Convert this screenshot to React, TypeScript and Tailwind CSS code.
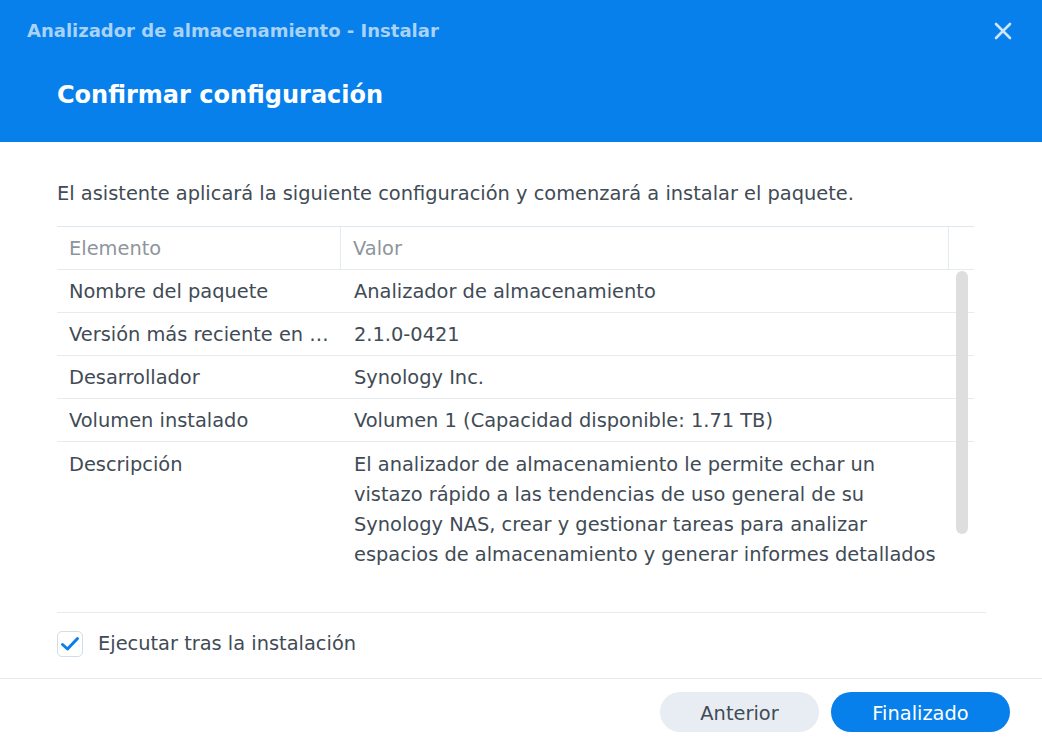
import React, { useState } from "react";

const rows = [
  { label: "Nombre del paquete", value: "Analizador de almacenamiento" },
  { label: "Versión más reciente en …", value: "2.1.0-0421" },
  { label: "Desarrollador", value: "Synology Inc." },
  { label: "Volumen instalado", value: "Volumen 1 (Capacidad disponible: 1.71 TB)" },
];

const description =
  "El analizador de almacenamiento le permite echar un vistazo rápido a las tendencias de uso general de su Synology NAS, crear y gestionar tareas para analizar espacios de almacenamiento y generar informes detallados";

export default function App() {
  const [runAfter, setRunAfter] = useState(true);

  return (
    <div
      className="w-[1042px] h-[748px] bg-white flex flex-col overflow-hidden text-[#414b55]"
      style={{ fontFamily: '"DejaVu Sans", Verdana, sans-serif' }}
    >
      {/* header */}
      <div className="h-[142px] bg-[#0780ec] flex flex-col shrink-0">
        <div className="flex items-center justify-between pl-[27px] pr-[30px] h-[61px]">
          <span className="text-[18px] font-bold text-[#a9d2f7]">
            Analizador de almacenamiento - Instalar
          </span>
          <button className="text-[#cfe5fb]">
            <svg width="18" height="18" viewBox="0 0 18 18" fill="none">
              <path d="M2 2L16 16M16 2L2 16" stroke="currentColor" strokeWidth="2.6" strokeLinecap="round" />
            </svg>
          </button>
        </div>
        <div className="pl-[57px] pt-[7px]">
          <h1 className="text-[24px] font-bold text-white leading-[54px]">Confirmar configuración</h1>
        </div>
      </div>

      {/* content */}
      <div className="flex-1 flex flex-col px-[57px] pt-[40px]">
        <p className="text-[19.4px] leading-[24px]">
          El asistente aplicará la siguiente configuración y comenzará a instalar el paquete.
        </p>

        <div className="mt-[20px] w-[917px] border-t border-[#dfe7ef] text-[19.4px]">
          <div className="flex h-[43px] border-b border-[#e6ebf0] text-[#8e959c]">
            <div className="w-[284px] pl-[12px] pt-[2px] flex items-center border-r border-[#e6ebf0]">Elemento</div>
            <div className="w-[608px] pl-[12px] pt-[2px] flex items-center border-r border-[#e6ebf0]">Valor</div>
            <div className="flex-1" />
          </div>

          <div className="relative h-[304px] overflow-hidden">
            {rows.map((r) => (
              <div key={r.label} className="flex border-b border-[#e6ebf0] pt-[7px] pb-[5px] leading-[30px]">
                <div className="w-[284px] pl-[12px] pr-[6px] truncate">{r.label}</div>
                <div className="w-[608px] pl-[13px] whitespace-nowrap">{r.value}</div>
              </div>
            ))}
            <div className="flex pt-[8px] pb-[5px] leading-[30px]">
              <div className="w-[284px] pl-[12px] pr-[6px]">Descripción</div>
              <div className="w-[608px] pl-[13px] pr-[3px]">{description}</div>
            </div>
            <div className="absolute left-[899px] top-[1px] w-[12px] h-[263px] rounded-full bg-[#dedede]" />
          </div>
        </div>

        <div className="mt-[38px] w-[929px] border-t border-[#e6ebf0] h-[66px] pb-[3px] flex items-center">
          <label className="flex items-center gap-[15px] cursor-pointer" onClick={() => setRunAfter(!runAfter)}>
            <span className="w-[26px] h-[26px] rounded-[5px] border border-[#d3dde8] bg-white flex items-center justify-center">
              {runAfter && (
                <svg width="20" height="16" viewBox="0 0 20 16" fill="none">
                  <path d="M2.5 8.5L7.5 13L17.5 2.5" stroke="#0780ec" strokeWidth="3" strokeLinecap="round" strokeLinejoin="round" />
                </svg>
              )}
            </span>
            <span className="text-[19.4px]">Ejecutar tras la instalación</span>
          </label>
        </div>
      </div>

      {/* footer */}
      <div className="h-[70px] border-t border-[#e6ebf0] flex items-start justify-end gap-[12px] pt-[13px] pr-[32px] shrink-0">
        <button className="w-[159px] h-[40px] pt-[4px] rounded-full bg-[#e8edf3] text-[19.4px] text-[#414b55]">Anterior</button>
        <button className="w-[179px] h-[40px] pt-[4px] rounded-full bg-[#0780ec] text-[19.4px] text-white">Finalizado</button>
      </div>
    </div>
  );
}
